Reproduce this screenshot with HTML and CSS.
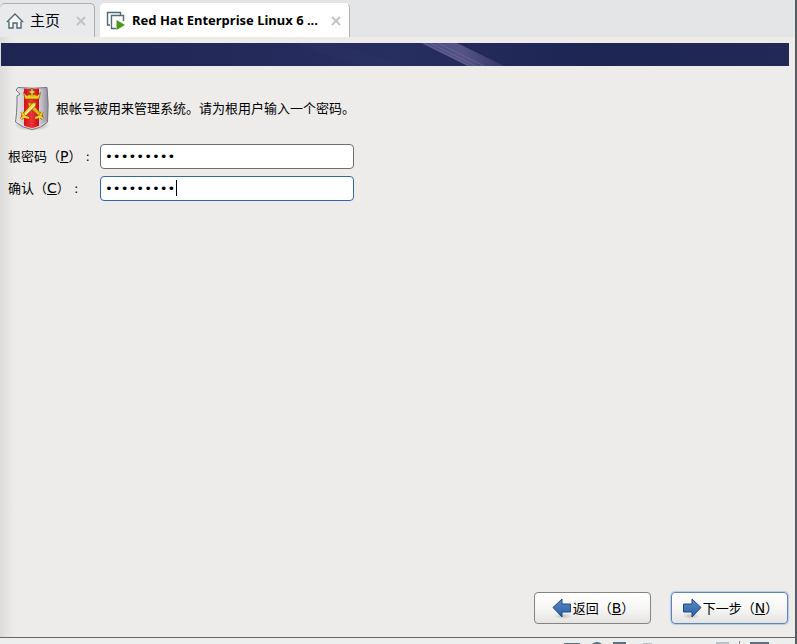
FILE: index.html
```html
<!DOCTYPE html>
<html lang="zh-CN">
<head>
  <meta charset="UTF-8">
  <title>Red Hat Enterprise Linux 6</title>
  <link rel="stylesheet" href="styles.css">
</head>
<body>
  <div class="window">
    <nav class="tabs">
      <div class="tab">
        <svg class="home-icon" width="18" height="18" viewBox="0 0 18 18">
          <path d="M1.500 9.500L9 2l7.500 7.500-1.500.7V16h-4v-5H7v5H3v-5.800z" fill="#f4f6f7" stroke="#526875" stroke-width="1.400"/>
        </svg>
        <a class="tab-name" href="#home">主页</a>
        <button class="close" aria-label="关闭主页">
          <svg width="10" height="10" viewBox="0 0 10 10"><path d="M1 1l8 8M9 1L1 9"/></svg>
        </button>
      </div>
      <div class="tab active">
        <svg class="vm-icon" width="20" height="20" viewBox="0 0 20 20">
          <path d="M4 14H1.500V1.500h13V4" fill="none" stroke="#526875" stroke-width="1.400"/>
          <path d="M10 17.500H5.500v-13h12V10" fill="none" stroke="#526875" stroke-width="1.400"/>
          <path d="M10.500 9l8.500 5-8.500 5z" fill="#459a16"/>
        </svg>
        <a class="tab-name" href="#vm">Red Hat Enterprise Linux 6 ...</a>
        <button class="close" aria-label="关闭虚拟机">
          <svg width="10" height="10" viewBox="0 0 10 10"><path d="M1 1l8 8M9 1L1 9"/></svg>
        </button>
      </div>
    </nav>

    <form class="installer">
      <svg class="banner" height="23" viewBox="0 0 788 23" preserveAspectRatio="none">
        <defs>
          <linearGradient id="night">
            <stop offset="0" stop-color="#1e2552"/>
            <stop offset=".5" stop-color="#272e60"/>
            <stop offset=".75" stop-color="#1d2553"/>
            <stop offset="1" stop-color="#222957"/>
          </linearGradient>
          <linearGradient id="ray">
            <stop offset="0" stop-color="#5b5b91"/>
            <stop offset=".5" stop-color="#6d6496"/>
            <stop offset="1" stop-color="#393d70"/>
          </linearGradient>
        </defs>
        <rect width="788" height="23" fill="url(#night)"/>
        <path d="M290 0h45l68 23h-47z" fill="#303668" opacity=".3"/>
        <path d="M420 0h36l47 23h-36z" fill="url(#ray)" opacity=".7"/>
        <path d="M423 0l45 23M429 0l46 23M437 0l46 23" stroke="#8983b0" opacity=".35"/>
      </svg>

      <div class="content">
        <div class="intro">
          <svg class="shield" width="48" height="48" viewBox="0 0 48 48">
            <defs>
              <linearGradient id="silver">
                <stop offset="0" stop-color="#e9e8ec"/>
                <stop offset=".3" stop-color="#cbc9d1"/>
                <stop offset=".7" stop-color="#d6d4db"/>
                <stop offset="1" stop-color="#928e9b"/>
              </linearGradient>
              <linearGradient id="red">
                <stop offset="0" stop-color="#d90d14"/>
                <stop offset=".5" stop-color="#ed3436"/>
                <stop offset="1" stop-color="#d0080f"/>
              </linearGradient>
              <radialGradient id="shade">
                <stop offset="0" stop-color="#666" stop-opacity=".7"/>
                <stop offset="1" stop-color="#666" stop-opacity="0"/>
              </radialGradient>
            </defs>
            <ellipse cx="24" cy="41" rx="18" ry="6" fill="url(#shade)"/>
            <path d="M10 3.500Q25 5 39 3.500Q41 20 39.500 38Q33 44 24 45.500Q15 44 7.500 38Q9 28 9 19L9 12L12 10L8 6Z" fill="url(#silver)" stroke="#77737e"/>
            <path d="M16 4.500q8 1 15 0v37.500q-3 1.500-7 2.500-4-1-8-2.500z" fill="url(#red)"/>
            <path d="M9 37.500Q15 43 24 44.500 33 43 38.500 37.500" fill="none" stroke="#fff" opacity=".5"/>
            <path d="M15.500 8.500l3 3 4-1h3l4 1 3-3-1.500 6.500H17z" fill="#f4cc25" stroke="#8b5807" stroke-width=".7"/>
            <path d="M24 4.500v8M21 8h6" stroke="#764909" stroke-width="2.500"/>
            <path d="M24 5v8M21.500 8h5" stroke="#ffdf42" stroke-width="1.300"/>
            <path d="M33 34L20.500 22l-.5-3.500 3.500.5L35 32z" fill="#e6b818" stroke="#8d5b08" stroke-width=".7"/>
            <path d="M15 34l12.500-12 .5-3.500-3.500.5L13 32z" fill="#f5d83c" stroke="#8d5b08" stroke-width=".7"/>
            <path d="M16 32l11-11.500" stroke="#fff6a6" stroke-width="1.200"/>
            <path d="M14 28q1 5 7 6M34 28q-1 5-7 6M16 32l-3 3M32 32l3 3" fill="none" stroke="#845307" stroke-width="3"/>
            <path d="M14 28q1 5 7 6M34 28q-1 5-7 6M16 32l-3 3M32 32l3 3" fill="none" stroke="#f3cb25" stroke-width="2"/>
          </svg>
          <p>根帐号被用来管理系统。请为根用户输入一个密码。</p>
        </div>

        <div class="fields">
          <label for="password">根密码（<u>P</u>） :</label>
          <div class="entry">
            <input id="password" type="password" value="rootpass1">
          </div>
          <label for="confirm">确认（<u>C</u>） :</label>
          <div class="entry focused">
            <input id="confirm" type="password" value="rootpass1">
            <span class="caret"></span>
          </div>
        </div>
      </div>

      <div class="actions">
        <button class="nav-button" type="button">
          <svg width="22" height="24" viewBox="0 0 22 24">
            <defs>
              <linearGradient id="blue" x2="0" y2="1">
                <stop offset="0" stop-color="#5b8bc4"/>
                <stop offset="1" stop-color="#2860a7"/>
              </linearGradient>
            </defs>
            <ellipse cx="12" cy="20" rx="9" ry="3" fill="url(#shade)" opacity=".5"/>
            <path d="M2 11.500L11 3v5h8.500v8H11v5z" fill="url(#blue)" stroke="#204a87"/>
          </svg>
          <span>返回（<u>B</u>）</span>
        </button>
        <button class="nav-button primary" type="button">
          <svg width="22" height="24" viewBox="0 0 22 24">
            <ellipse cx="10" cy="20" rx="9" ry="3" fill="url(#shade)" opacity=".5"/>
            <path d="M20 11.500L11 3v5H2.500v8H11v5z" fill="url(#blue)" stroke="#204a87"/>
          </svg>
          <span>下一步（<u>N</u>）</span>
        </button>
      </div>
    </form>

    <footer class="status">
      <svg width="212" height="12" viewBox="0 0 212 12">
        <g fill="none" stroke="#5d707c" stroke-width="2">
          <path d="M1 11V6h14v5"/>
          <circle cx="33" cy="11" r="6"/>
          <path d="M50 11V5h11v6"/>
          <path d="M79 6h9M153 11V5h11v6" stroke="#bcc3c7"/>
          <path d="M187 11V5h17v6" fill="#34958e"/>
        </g>
        <path d="M175.500 3v9" stroke="#888"/>
      </svg>
    </footer>
  </div>
</body>
</html>
```
FILE: styles.css
```css
* {
  box-sizing: border-box;
}

body {
  margin: 0;
  color: #000;
  background: #edecea;
  font-family: "DejaVu Sans", "Noto Sans CJK SC", sans-serif;
  font-size: 13px;
}

.window {
  display: flex;
  flex-direction: column;
  height: 100vh;
  border-right: 2px solid #555d62;
  overflow: hidden;
}

/* Tabs */
.tabs {
  display: flex;
  gap: 5px;
  padding-top: 3px;
  background: #e3e5e7;
}

.tab {
  display: flex;
  align-items: center;
  height: 34px;
  padding: 0 8px 0 6px;
  gap: 6px;
  border: 1px solid #adb1b5;
  border-bottom: 0;
  border-left: 0;
  border-radius: 5px 5px 0 0;
  background: #e8eaec;
}

.tab.active {
  border-top-color: #fff;
  background: #fff;
}

.tab-name {
  color: #000;
  font-family: "Noto Sans CJK SC", sans-serif;
  font-size: 15px;
  line-height: 20px;
  padding-bottom: 2px;
  text-decoration: none;
  white-space: nowrap;
}

.active .tab-name {
  font-family: "Noto Sans", sans-serif;
  font-size: 13px;
  font-weight: bold;
}

.close {
  display: flex;
  margin-left: 10px;
  padding: 0;
  border: 0;
  background: none;
}

.active .close {
  margin-left: 7px;
}

.close path {
  stroke: #c3c4c5;
  stroke-width: 2;
}

/* Installer */
.installer {
  display: flex;
  flex: 1;
  flex-direction: column;
  padding: 6px 6px 13px 1px;
  background: linear-gradient(to right, #dddcda, #edecea 14px);
}

.banner {
  display: block;
  width: 100%;
}

.content {
  flex: 1;
  padding: 18px 7px;
}

.intro {
  display: flex;
  align-items: center;
}

.intro p {
  margin: 0;
  padding-bottom: 2px;
}

.fields {
  display: grid;
  grid-template-columns: 92px 254px;
  row-gap: 7px;
  align-items: center;
  margin-top: 12px;
}

.fields label {
  padding-bottom: 2px;
}

.fields u,
.nav-button u {
  font-size: 14px;
}

.entry {
  position: relative;
}

.entry input {
  display: block;
  width: 100%;
  height: 25px;
  padding: 0 4px 1px;
  border: 1px solid #6f6e6b;
  border-radius: 4px;
  outline: 0;
  background: #fff;
  font-family: "DejaVu Sans Mono", monospace;
  font-size: 13px;
}

.entry.focused input {
  border-color: #3465a4;
  caret-color: transparent;
}

.caret {
  position: absolute;
  top: 4px;
  left: 76px;
  width: 1px;
  height: 16px;
  background: #000;
}

.actions {
  display: flex;
  justify-content: flex-end;
  gap: 20px;
  padding-right: 1px;
}

.nav-button {
  display: flex;
  align-items: center;
  justify-content: center;
  width: 117px;
  height: 32px;
  padding: 0;
  border: 1px solid #858480;
  border-radius: 4px;
  color: #000;
  background: linear-gradient(#fff, #f7f7f6 50%, #e5e4e2);
  font: inherit;
  white-space: nowrap;
}

.nav-button span {
  padding-bottom: 2px;
}

.nav-button.primary {
  border-color: #5b85b8;
  box-shadow: 0 0 1px 1px #b9cce2;
}

/* Status bar */
.status {
  display: flex;
  flex: none;
  justify-content: flex-end;
  height: 7px;
  padding-right: 19px;
  border-top: 1px solid #666;
  background: #edeeee;
  overflow: hidden;
}
```
